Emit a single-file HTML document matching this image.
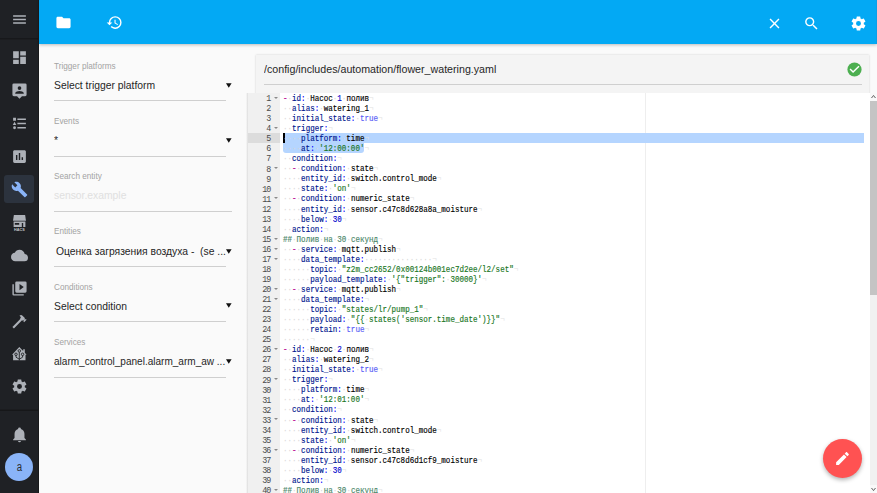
<!DOCTYPE html>
<html><head><meta charset="utf-8">
<style>
*{margin:0;padding:0;box-sizing:border-box}
html,body{width:877px;height:493px;overflow:hidden;background:#fafafa;font-family:"Liberation Sans",sans-serif;position:relative}
.abs{position:absolute}
#sidebar{left:0;top:0;width:39px;height:493px;background:#1f2125}
#sidebar .sep{position:absolute;left:0;width:39px;height:1px;background:#18191c}
#sbedge{left:38px;top:0;width:1px;height:493px;background:#18191b;z-index:6}
#sidebar svg{position:absolute;width:17px;height:17px;fill:#adb1b8}
#header{left:39px;top:0;width:838px;height:44px;background:#03a9f4;box-shadow:0 1px 3px rgba(0,0,0,.25);z-index:5}
#header svg{position:absolute;width:17px;height:17px;fill:#fff}
#left{left:39px;top:44px;width:208px;height:449px;background:#fafafa}
.lbl{position:absolute;left:54px;font-size:8.2px;color:#a3a3a3;white-space:nowrap}
.val{position:absolute;left:54px;font-size:11px;color:#262626;white-space:nowrap;transform:scaleX(.94);transform-origin:0 0}
.ul{position:absolute;left:54px;width:171px;height:1px;background:#cfcfcf}
.arr{position:absolute;left:226.4px;width:5.6px;height:5px;fill:#111}
#card{left:256px;top:55px;width:613px;height:60px;background:#f4f4f4;box-shadow:0 0 2px rgba(0,0,0,.18)}
#editor{left:248px;top:93px;width:629px;height:400px;background:#fff;overflow:hidden}
#edsh{left:246px;top:93px;width:2px;height:400px;background:linear-gradient(to right,rgba(0,0,0,0),rgba(0,0,0,.12))}
#gutter{position:absolute;left:0;top:0;width:32px;height:400px;background:#f0f0f0;font:8.4px/10px "Liberation Mono",monospace;color:#333}
.gact{position:absolute;left:0;top:40.2px;width:32px;height:10px;background:#dcdcdc}
.lns{position:absolute;left:0;top:1.2px;width:32px;color:#4a4a4a}
.lns div{height:10.06px;text-align:right;padding-right:9.5px;position:relative;letter-spacing:-.87px}
.fw{position:absolute;left:25.6px;top:2.8px;width:0;height:0;border-left:2.2px solid transparent;border-right:2.2px solid transparent;border-top:2.8px solid #8a8a8a}
.pm{position:absolute;left:397px;top:0;width:1px;height:400px;background:#eeeeee}
.sel1{position:absolute;left:35px;top:40.2px;width:581px;height:10px;background:rgb(181,213,255)}
.sel2{position:absolute;left:35px;top:50.2px;width:81px;height:10px;background:rgb(181,213,255);border-radius:0 0 3px 3px}
.cur{position:absolute;left:35px;top:40.2px;width:2px;height:10px;background:#000}
.code{position:absolute;left:35px;top:1px;font:8.4px/10.06px "Liberation Mono",monospace;color:#000;white-space:pre;transform:scaleX(.9);transform-origin:0 0;-webkit-text-stroke:.15px currentColor}
.code div{height:10.06px}
.code i{font-style:normal}
.k{color:rgb(0,22,142)}
.kw{color:blue}
.s{color:rgb(25,118,30)}
.c{color:rgb(76,136,107)}
.n{color:rgb(0,0,205)}
.t{color:rgb(88,92,246)}
.l{color:rgb(185,6,144)}
.code .i{color:#d6d6d6;-webkit-text-stroke:0}
.code .e{color:#e2e2e2}
.sb{position:absolute;left:622px;top:0;width:7px;height:400px;background:#f1f1f1}
.thumb{position:absolute;left:0;top:8px;width:7px;height:194px;background:#c4c4c4}
.sbu,.sbd{position:absolute;left:0;width:7px;height:8px;background:#f9f9f9}
.sbu{top:0}.sbd{bottom:0}
.sbu:after,.sbd:after{content:"";position:absolute;left:1px;width:5px;height:3px;background:#555}
.sbu:after{top:2px;clip-path:polygon(50% 0,100% 100%,80% 100%,50% 35%,20% 100%,0 100%)}
.sbd:after{top:3px;clip-path:polygon(0 0,20% 0,50% 65%,80% 0,100% 0,50% 100%)}
#fab{left:823px;top:439px;width:39px;height:39px;border-radius:50%;background:#ff5252;box-shadow:0 2px 4px rgba(0,0,0,.3)}
</style></head><body>
<div id="sidebar" class="abs">
  <svg style="left:11px;top:11px" viewBox="0 0 24 24"><path d="M3,6H21V8H3V6M3,11H21V13H3V11M3,16H21V18H3V16Z"/></svg>
  <div class="sep" style="top:38px;height:2px;background:#1c1d20"></div><div class="sep" style="top:38px;background:#17181b"></div>
  <svg style="left:11px;top:49px" viewBox="0 0 24 24"><path d="M13,3V9H21V3M13,21H21V11H13M3,21H11V15H3M3,13H11V3H3V13Z"/></svg>
  <svg style="left:11px;top:82px" viewBox="0 0 24 24"><path fill-rule="evenodd" d="M4,2H20A2,2 0 0 1 22,4V18A2,2 0 0 1 20,20H15.5L12,23.5L8.5,20H4A2,2 0 0 1 2,18V4A2,2 0 0 1 4,2ZM12,6A2.6,2.6 0 1 0 12,11.2A2.6,2.6 0 1 0 12,6ZM6,16.5V15.5C6,13.6 10,12.6 12,12.6C14,12.6 18,13.6 18,15.5V16.5Z"/></svg>
  <svg style="left:11px;top:115px" viewBox="0 0 24 24"><path d="M5,9.5L7.5,14H2.5L5,9.5M3,4H7V8H3V4M5,20A2,2 0 0,0 7,18A2,2 0 0,0 5,16A2,2 0 0,0 3,18A2,2 0 0,0 5,20M9,5V7H21V5H9M9,19H21V17H9V19M9,13H21V11H9V13Z"/></svg>
  <svg style="left:11px;top:148px" viewBox="0 0 24 24"><path d="M19 3H5C3.9 3 3 3.9 3 5V19C3 20.1 3.9 21 5 21H19C20.1 21 21 20.1 21 19V5C21 3.9 20.1 3 19 3M9 17H7V10H9V17M13 17H11V7H13V17M17 17H15V13H17V17Z"/></svg>
  <div class="abs" style="left:4px;top:175px;width:30px;height:28px;background:#2c333e;border-radius:3px"></div>
  <svg style="left:11px;top:181px;fill:#8ab4f8" viewBox="0 0 24 24"><path d="M22.7,19L13.6,9.9C14.5,7.6 14,4.9 12.1,3C10.1,1 7.1,0.6 4.7,1.7L9,6L6,9L1.6,4.7C0.4,7.1 0.9,10.1 2.9,12.1C4.8,14 7.5,14.5 9.8,13.6L18.9,22.7C19.3,23.1 19.9,23.1 20.3,22.7L22.6,20.4C23.1,20 23.1,19.3 22.7,19Z"/></svg>
  <svg style="left:0;top:200px;width:40px;height:40px" viewBox="0 0 40 40"><path d="M13.9,15H25.1L26,20.8H13Z"/><path fill-rule="evenodd" d="M13.6,21.4H25.4V27H13.6ZM14.8,23H19.2V24.8H14.8ZM21.8,23H23.2V27H21.8Z"/><text x="19.4" y="30.6" font-size="3.3" font-family="Liberation Sans" font-weight="bold" text-anchor="middle" fill="#c8cbd0" textLength="10.6" lengthAdjust="spacingAndGlyphs">HACS</text></svg>
  <svg style="left:11px;top:247px" viewBox="0 0 24 24"><path d="M19.35,10.03C18.67,6.59 15.64,4 12,4C9.11,4 6.6,5.64 5.35,8.03C2.34,8.36 0,10.9 0,14A6,6 0 0,0 6,20H19A5,5 0 0,0 24,15C24,12.36 21.95,10.22 19.35,10.03Z"/></svg>
  <svg style="left:11px;top:280px" viewBox="0 0 24 24"><path d="M4,6H2V20A2,2 0 0,0 4,22H18V20H4M22,4V16A2,2 0 0,1 20,18H8A2,2 0 0,1 6,16V4A2,2 0 0,1 8,2H20A2,2 0 0,1 22,4M12,14.5L18,10L12,5.5V14.5Z"/></svg>
  <svg style="left:11px;top:313px" viewBox="0 0 24 24"><path d="M2 19.63L13.43 8.2L12.72 7.5L14.14 6.07L12 3.89C13.2 2.7 15.09 2.7 16.27 3.89L19.87 7.5L18.45 8.91H21.29L22 9.62L18.45 13.21L17.74 12.5V9.62L16.27 11.04L15.56 10.33L4.13 21.76L2 19.63Z"/></svg>
  <svg style="left:0;top:335px;width:40px;height:40px" viewBox="0 0 40 40"><path d="M12,19.7L19.3,12L23.2,16.1V14.3H24.8V17.8L26.6,19.7H25.5V25.3H13.1V19.7Z"/><g stroke="#1f2125" stroke-width="0.9" fill="none"><path d="M19.3,17.2V25.5M16,20.5V22.2L19.3,24.2M22.6,20.5V22.2L19.3,24.2"/><circle cx="19.3" cy="15.9" r="1.25"/><circle cx="16" cy="19.3" r="1.25"/><circle cx="22.6" cy="19.3" r="1.25"/></g></svg>
  <svg style="left:11px;top:378px" viewBox="0 0 24 24"><path d="M12,15.5A3.5,3.5 0 0,1 8.5,12A3.5,3.5 0 0,1 12,8.5A3.5,3.5 0 0,1 15.5,12A3.5,3.5 0 0,1 12,15.5M19.43,12.97C19.47,12.65 19.5,12.33 19.5,12C19.5,11.67 19.47,11.34 19.43,11L21.54,9.37C21.73,9.22 21.780,8.95 21.66,8.73L19.66,5.27C19.54,5.05 19.27,4.96 19.05,5.05L16.56,6.05C16.04,5.66 15.5,5.32 14.87,5.07L14.5,2.42C14.46,2.18 14.25,2 14,2H10C9.75,2 9.54,2.18 9.5,2.42L9.13,5.07C8.5,5.32 7.960,5.66 7.44,6.05L4.95,5.05C4.73,4.96 4.46,5.05 4.34,5.27L2.34,8.73C2.21,8.95 2.27,9.22 2.46,9.37L4.57,11C4.53,11.34 4.5,11.67 4.5,12C4.5,12.33 4.53,12.65 4.57,12.97L2.46,14.63C2.27,14.78 2.21,15.05 2.34,15.27L4.34,18.73C4.46,18.95 4.73,19.03 4.95,18.95L7.44,17.94C7.96,18.34 8.5,18.68 9.13,18.93L9.5,21.58C9.54,21.82 9.75,22 10,22H14C14.25,22 14.46,21.82 14.5,21.58L14.87,18.93C15.5,18.67 16.04,18.34 16.56,17.94L19.05,18.95C19.27,19.03 19.54,18.95 19.66,18.73L21.66,15.27C21.78,15.05 21.73,14.78 21.54,14.63L19.43,12.97Z"/></svg>
  <div class="sep" style="top:409px;height:2px;background:#1b1c1f"></div><div class="sep" style="top:410px;background:#161719"></div>
  <svg style="left:11px;top:426px" viewBox="0 0 24 24"><path d="M21,19V20H3V19L5,17V11C5,7.9 7.03,5.17 10,4.29C10,4.19 10,4.1 10,4A2,2 0 0,1 12,2A2,2 0 0,1 14,4C14,4.1 14,4.19 14,4.29C16.97,5.17 19,7.9 19,11V17L21,19M14,21A2,2 0 0,1 12,23A2,2 0 0,1 10,21"/></svg>
  <div class="abs" style="left:5.3px;top:453px;width:28px;height:28px;border-radius:50%;background:#8ab4f8;color:#2a2c30;font-size:12px;line-height:28px;text-align:center"><span style="display:inline-block;transform:scaleX(.8)">a</span></div>
</div>

<div id="sbedge" class="abs"></div>
<div id="header" class="abs">
  <div class="abs" style="left:837px;top:0;width:1px;height:44px;background:#0aa0e8"></div>
  <svg style="left:16.3px;top:14.3px" viewBox="0 0 24 24"><path d="M10,4H4C2.89,4 2,4.89 2,6V18A2,2 0 0,0 4,20H20A2,2 0 0,0 22,18V8C22,6.89 21.1,6 20,6H12L10,4Z"/></svg>
  <svg style="left:67px;top:14px" viewBox="0 0 24 24"><path d="M13,3A9,9 0 0,0 4,12H1L4.89,15.89L4.96,16.03L9,12H6A7,7 0 0,1 13,5A7,7 0 0,1 20,12A7,7 0 0,1 13,19C11.07,19 9.32,18.21 8.06,16.94L6.64,18.36C8.27,20 10.5,21 13,21A9,9 0 0,0 22,12A9,9 0 0,0 13,3M12,8V13L16.28,15.54L17,14.33L13.5,12.25V8H12Z"/></svg>
  <svg style="left:727px;top:15px" viewBox="0 0 24 24"><path d="M19,6.41L17.59,5L12,10.59L6.41,5L5,6.41L10.59,12L5,17.59L6.41,19L12,13.41L17.59,19L19,17.59L13.41,12L19,6.41Z"/></svg>
  <svg style="left:764px;top:15px" viewBox="0 0 24 24"><path d="M9.5,3A6.5,6.5 0 0,1 16,9.5C16,11.11 15.41,12.59 14.44,13.73L14.71,14H15.5L20.5,19L19,20.5L14,15.5V14.71L13.73,14.44C12.59,15.41 11.11,16 9.5,16A6.5,6.5 0 0,1 3,9.5A6.5,6.5 0 0,1 9.5,3M9.5,5C7,5 5,7 5,9.5C5,12 7,14 9.5,14C12,14 14,12 14,9.5C14,7 12,5 9.5,5Z"/></svg>
  <svg style="left:811px;top:14.7px" viewBox="0 0 24 24"><path d="M12,15.5A3.5,3.5 0 0,1 8.5,12A3.5,3.5 0 0,1 12,8.5A3.5,3.5 0 0,1 15.5,12A3.5,3.5 0 0,1 12,15.5M19.43,12.97C19.47,12.65 19.5,12.33 19.5,12C19.5,11.67 19.47,11.34 19.43,11L21.54,9.37C21.73,9.22 21.78,8.95 21.66,8.73L19.66,5.27C19.54,5.05 19.27,4.96 19.05,5.05L16.56,6.05C16.04,5.66 15.5,5.32 14.87,5.07L14.5,2.42C14.46,2.18 14.25,2 14,2H10C9.75,2 9.54,2.18 9.5,2.42L9.13,5.07C8.5,5.32 7.96,5.66 7.44,6.05L4.95,5.05C4.73,4.96 4.46,5.05 4.34,5.27L2.34,8.73C2.21,8.95 2.27,9.22 2.46,9.37L4.57,11C4.53,11.34 4.5,11.67 4.5,12C4.5,12.33 4.53,12.65 4.57,12.97L2.46,14.63C2.27,14.78 2.21,15.05 2.34,15.27L4.34,18.73C4.46,18.95 4.73,19.03 4.95,18.95L7.44,17.940C7.96,18.34 8.5,18.68 9.13,18.93L9.5,21.58C9.54,21.82 9.75,22 10,22H14C14.25,22 14.46,21.82 14.5,21.58L14.87,18.93C15.5,18.67 16.04,18.34 16.56,17.94L19.05,18.95C19.27,19.03 19.54,18.95 19.66,18.73L21.66,15.27C21.78,15.05 21.73,14.78 21.54,14.63L19.43,12.97Z"/></svg>
</div>

<div id="left" class="abs"></div>
<div class="lbl" style="top:62px">Trigger platforms</div>
<div class="val" style="top:79px">Select trigger platform</div>
<svg class="arr" style="top:83.2px" viewBox="0 0 6 5"><path d="M0,0H6L3,5Z"/></svg>
<div class="ul" style="top:100px;width:172px"></div>

<div class="lbl" style="top:117px">Events</div>
<div class="val" style="top:134px">*</div>
<svg class="arr" style="top:138.2px" viewBox="0 0 6 5"><path d="M0,0H6L3,5Z"/></svg>
<div class="ul" style="top:156px;width:172px"></div>

<div class="lbl" style="top:172px">Search entity</div>
<div class="val" style="top:189px;color:#e0e0e0">sensor.example</div>
<div class="ul" style="top:211px;width:178px"></div>

<div class="lbl" style="top:227px">Entities</div>
<div class="val" style="top:245px;left:56px">Оценка загрязения воздуха -&nbsp; (se ...</div>
<svg class="arr" style="top:249px" viewBox="0 0 6 5"><path d="M0,0H6L3,5Z"/></svg>
<div class="ul" style="top:266px;width:172px"></div>

<div class="lbl" style="top:283px">Conditions</div>
<div class="val" style="top:300px">Select condition</div>
<svg class="arr" style="top:303.2px" viewBox="0 0 6 5"><path d="M0,0H6L3,5Z"/></svg>
<div class="ul" style="top:321px;width:172px"></div>

<div class="lbl" style="top:338px">Services</div>
<div class="val" style="top:355px;transform:scaleX(.912)">alarm_control_panel.alarm_arm_aw ...</div>
<svg class="arr" style="top:359.2px" viewBox="0 0 6 5"><path d="M0,0H6L3,5Z"/></svg>
<div class="ul" style="top:377px;width:172px"></div>

<div id="card" class="abs">
  <div class="abs" style="left:8px;top:7.5px;font-size:11.1px;color:#262626;white-space:nowrap;transform:scaleX(.961);transform-origin:0 0">/config/includes/automation/flower_watering.yaml</div>
  <div class="abs" style="left:8px;top:29px;width:598px;height:1px;background:#cfcfcf"></div>
  <svg class="abs" style="left:590px;top:6px;width:17px;height:17px;fill:#4caf50" viewBox="0 0 24 24"><circle cx="12" cy="12" r="10" fill="#4caf50"/><path fill="#fff" d="M10 17L5 12L6.41 10.59L10 14.17L17.59 6.58L19 8L10 17Z"/></svg>
</div>

<div id="edsh" class="abs"></div>
<div id="editor" class="abs">
  <div id="gutter"><div class="gact"></div><div class="lns"><div>1<b class="fw"></b></div><div>2</div><div>3</div><div>4<b class="fw"></b></div><div>5</div><div>6</div><div>7</div><div>8<b class="fw"></b></div><div>9</div><div>10</div><div>11<b class="fw"></b></div><div>12</div><div>13</div><div>14</div><div>15<b class="fw"></b></div><div>16<b class="fw"></b></div><div>17<b class="fw"></b></div><div>18</div><div>19</div><div>20<b class="fw"></b></div><div>21<b class="fw"></b></div><div>22</div><div>23</div><div>24</div><div>25</div><div>26<b class="fw"></b></div><div>27</div><div>28</div><div>29<b class="fw"></b></div><div>30</div><div>31</div><div>32</div><div>33<b class="fw"></b></div><div>34</div><div>35</div><div>36<b class="fw"></b></div><div>37</div><div>38</div><div>39</div><div>40<b class="fw"></b></div></div></div>
  <div class="pm"></div>
  <div class="sel1"></div><div class="sel2"></div><div class="cur"></div>
  <div class="code"><div><span class="l">-</span><i class="i">·</i><span class="k">id</span><span class="kw">:</span><i class="i">·</i>Насос<i class="i">·</i><span class="n">1</span><i class="i">·</i>полив<i class="i e">¬</i></div><div><i class="i">··</i><span class="k">alias</span><span class="kw">:</span><i class="i">·</i>watering_1<i class="i e">¬</i></div><div><i class="i">··</i><span class="k">initial_state</span><span class="kw">:</span><i class="i">·</i><span class="t">true</span><i class="i e">¬</i></div><div><i class="i">··</i><span class="k">trigger</span><span class="kw">:</span><i class="i e">¬</i></div><div><i class="i">····</i><span class="k">platform</span><span class="kw">:</span><i class="i">·</i>time<i class="i e">¬</i></div><div><i class="i">····</i><span class="k">at</span><span class="kw">:</span><i class="i">·</i><span class="s">&#x27;12:00:00&#x27;</span><i class="i e">¬</i></div><div><i class="i">··</i><span class="k">condition</span><span class="kw">:</span><i class="i e">¬</i></div><div><i class="i">··</i><span class="l">-</span><i class="i">·</i><span class="k">condition</span><span class="kw">:</span><i class="i">·</i>state<i class="i e">¬</i></div><div><i class="i">····</i><span class="k">entity_id</span><span class="kw">:</span><i class="i">·</i>switch.control_mode<i class="i e">¬</i></div><div><i class="i">····</i><span class="k">state</span><span class="kw">:</span><i class="i">·</i><span class="s">&#x27;on&#x27;</span><i class="i e">¬</i></div><div><i class="i">··</i><span class="l">-</span><i class="i">·</i><span class="k">condition</span><span class="kw">:</span><i class="i">·</i>numeric_state<i class="i e">¬</i></div><div><i class="i">····</i><span class="k">entity_id</span><span class="kw">:</span><i class="i">·</i>sensor.c47c8d628a8a_moisture<i class="i e">¬</i></div><div><i class="i">····</i><span class="k">below</span><span class="kw">:</span><i class="i">·</i><span class="n">30</span><i class="i e">¬</i></div><div><i class="i">··</i><span class="k">action</span><span class="kw">:</span><i class="i e">¬</i></div><div><span class="c">##<i class="i">·</i>Полив<i class="i">·</i>на<i class="i">·</i>30<i class="i">·</i>секунд</span><i class="i e">¬</i></div><div><i class="i">··</i><span class="l">-</span><i class="i">·</i><span class="k">service</span><span class="kw">:</span><i class="i">·</i>mqtt.publish<i class="i e">¬</i></div><div><i class="i">····</i><span class="k">data_template</span><span class="kw">:</span><i class="i">···············</i><i class="i e">¬</i></div><div><i class="i">······</i><span class="k">topic</span><span class="kw">:</span><i class="i">·</i><span class="s">&quot;z2m_cc2652/0x00124b001ec7d2ee/l2/set&quot;</span><i class="i e">¬</i></div><div><i class="i">······</i><span class="k">payload_template</span><span class="kw">:</span><i class="i">·</i><span class="s">&#x27;{&quot;trigger&quot;:<i class="i">·</i>30000}&#x27;</span><i class="i e">¬</i></div><div><i class="i">··</i><span class="l">-</span><i class="i">·</i><span class="k">service</span><span class="kw">:</span><i class="i">·</i>mqtt.publish<i class="i e">¬</i></div><div><i class="i">····</i><span class="k">data_template</span><span class="kw">:</span><i class="i e">¬</i></div><div><i class="i">······</i><span class="k">topic</span><span class="kw">:</span><i class="i">·</i><span class="s">&quot;states/lr/pump_1&quot;</span><i class="i e">¬</i></div><div><i class="i">······</i><span class="k">payload</span><span class="kw">:</span><i class="i">·</i><span class="s">&quot;{{<i class="i">·</i>states(&#x27;sensor.time_date&#x27;)}}&quot;</span><i class="i e">¬</i></div><div><i class="i">······</i><span class="k">retain</span><span class="kw">:</span><i class="i">·</i><span class="t">true</span><i class="i e">¬</i></div><div><i class="i">······</i><i class="i e">¬</i></div><div><span class="l">-</span><i class="i">·</i><span class="k">id</span><span class="kw">:</span><i class="i">·</i>Насос<i class="i">·</i><span class="n">2</span><i class="i">·</i>полив<i class="i e">¬</i></div><div><i class="i">··</i><span class="k">alias</span><span class="kw">:</span><i class="i">·</i>watering_2<i class="i e">¬</i></div><div><i class="i">··</i><span class="k">initial_state</span><span class="kw">:</span><i class="i">·</i><span class="t">true</span><i class="i e">¬</i></div><div><i class="i">··</i><span class="k">trigger</span><span class="kw">:</span><i class="i e">¬</i></div><div><i class="i">····</i><span class="k">platform</span><span class="kw">:</span><i class="i">·</i>time<i class="i e">¬</i></div><div><i class="i">····</i><span class="k">at</span><span class="kw">:</span><i class="i">·</i><span class="s">&#x27;12:01:00&#x27;</span><i class="i e">¬</i></div><div><i class="i">··</i><span class="k">condition</span><span class="kw">:</span><i class="i e">¬</i></div><div><i class="i">··</i><span class="l">-</span><i class="i">·</i><span class="k">condition</span><span class="kw">:</span><i class="i">·</i>state<i class="i e">¬</i></div><div><i class="i">····</i><span class="k">entity_id</span><span class="kw">:</span><i class="i">·</i>switch.control_mode<i class="i e">¬</i></div><div><i class="i">····</i><span class="k">state</span><span class="kw">:</span><i class="i">·</i><span class="s">&#x27;on&#x27;</span><i class="i e">¬</i></div><div><i class="i">··</i><span class="l">-</span><i class="i">·</i><span class="k">condition</span><span class="kw">:</span><i class="i">·</i>numeric_state<i class="i e">¬</i></div><div><i class="i">····</i><span class="k">entity_id</span><span class="kw">:</span><i class="i">·</i>sensor.c47c8d6d1cf9_moisture<i class="i e">¬</i></div><div><i class="i">····</i><span class="k">below</span><span class="kw">:</span><i class="i">·</i><span class="n">30</span><i class="i e">¬</i></div><div><i class="i">··</i><span class="k">action</span><span class="kw">:</span><i class="i e">¬</i></div><div><span class="c">##<i class="i">·</i>Полив<i class="i">·</i>на<i class="i">·</i>30<i class="i">·</i>секунд</span><i class="i e">¬</i></div></div>
  <div class="sb"><div class="sbu"></div><div class="thumb"></div><div class="sbd"></div></div>
</div>

<div id="fab" class="abs"><svg style="position:absolute;left:11px;top:11px;width:17px;height:17px;fill:#fff" viewBox="0 0 24 24"><path d="M20.71,7.04C21.1,6.65 21.1,6 20.71,5.63L18.37,3.29C18,2.9 17.35,2.9 16.96,3.29L15.12,5.12L18.87,8.87M3,17.25V21H6.75L17.81,9.93L14.06,6.18L3,17.25Z"/></svg></div>
</body></html>
